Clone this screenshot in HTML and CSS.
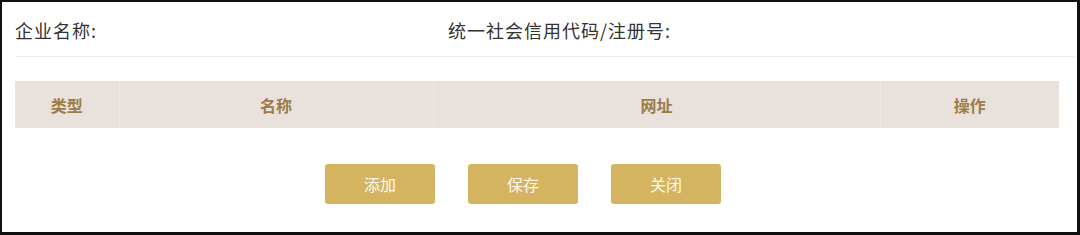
FILE: index.html
```html
<!DOCTYPE html>
<html lang="zh-CN">
<head>
    <meta charset="UTF-8">
    <title>企业网址</title>
    <link rel="stylesheet" href="styles.css">
</head>
<body>
    <div class="frame">
        <div class="info-row">
            <div class="field">企业名称:</div>
            <div class="field">统一社会信用代码/注册号:</div>
        </div>

        <table class="site-table">
            <colgroup>
                <col class="col-type">
                <col class="col-name">
                <col class="col-url">
                <col class="col-op">
            </colgroup>
            <thead>
                <tr>
                    <th>类型</th>
                    <th>名称</th>
                    <th>网址</th>
                    <th>操作</th>
                </tr>
            </thead>
            <tbody></tbody>
        </table>

        <div class="actions">
            <button type="button" class="btn">添加</button>
            <button type="button" class="btn">保存</button>
            <button type="button" class="btn">关闭</button>
        </div>
    </div>
</body>
</html>
```

FILE: styles.css
```css
body {
    margin: 0;
    padding: 0;
    font-family: "Noto Sans CJK SC", "Noto Sans", sans-serif;
    background: #fff;
}

.frame {
    width: 1080px;
    height: 235px;
    box-sizing: border-box;
    border: 2px solid #111;
    border-right-width: 3px;
    border-bottom-width: 3px;
}

.info-row {
    display: grid;
    grid-template-columns: 433px 1fr;
    align-items: center;
    height: 52px;
    padding-top: 2px;
    margin: 0 2px 0 13px;
    border-bottom: 1px solid #eeeeee;
}

.field {
    font-size: 18px;
    letter-spacing: 1px;
    color: #333;
}

.site-table {
    width: 1044px;
    margin: 24px 0 0 13px;
    border-collapse: collapse;
    table-layout: fixed;
}

.col-type { width: 104px; }
.col-name { width: 314px; }
.col-url { width: 447px; }
.col-op { width: 179px; }

.site-table th {
    height: 47px;
    padding: 0;
    background: #e8e1dc;
    color: #9b7d47;
    font-size: 16px;
    font-weight: bold;
    text-align: center;
    border-left: 1px solid #efeae5;
}

.site-table th:first-child {
    border-left: none;
}

.actions {
    display: flex;
    justify-content: center;
    gap: 33px;
    margin-top: 36px;
    padding-right: 33px;
}

.btn {
    width: 110px;
    height: 40px;
    border: none;
    border-radius: 3px;
    background: #d5b461;
    color: #fdf8ec;
    font-family: inherit;
    font-size: 16px;
    cursor: pointer;
}
```
